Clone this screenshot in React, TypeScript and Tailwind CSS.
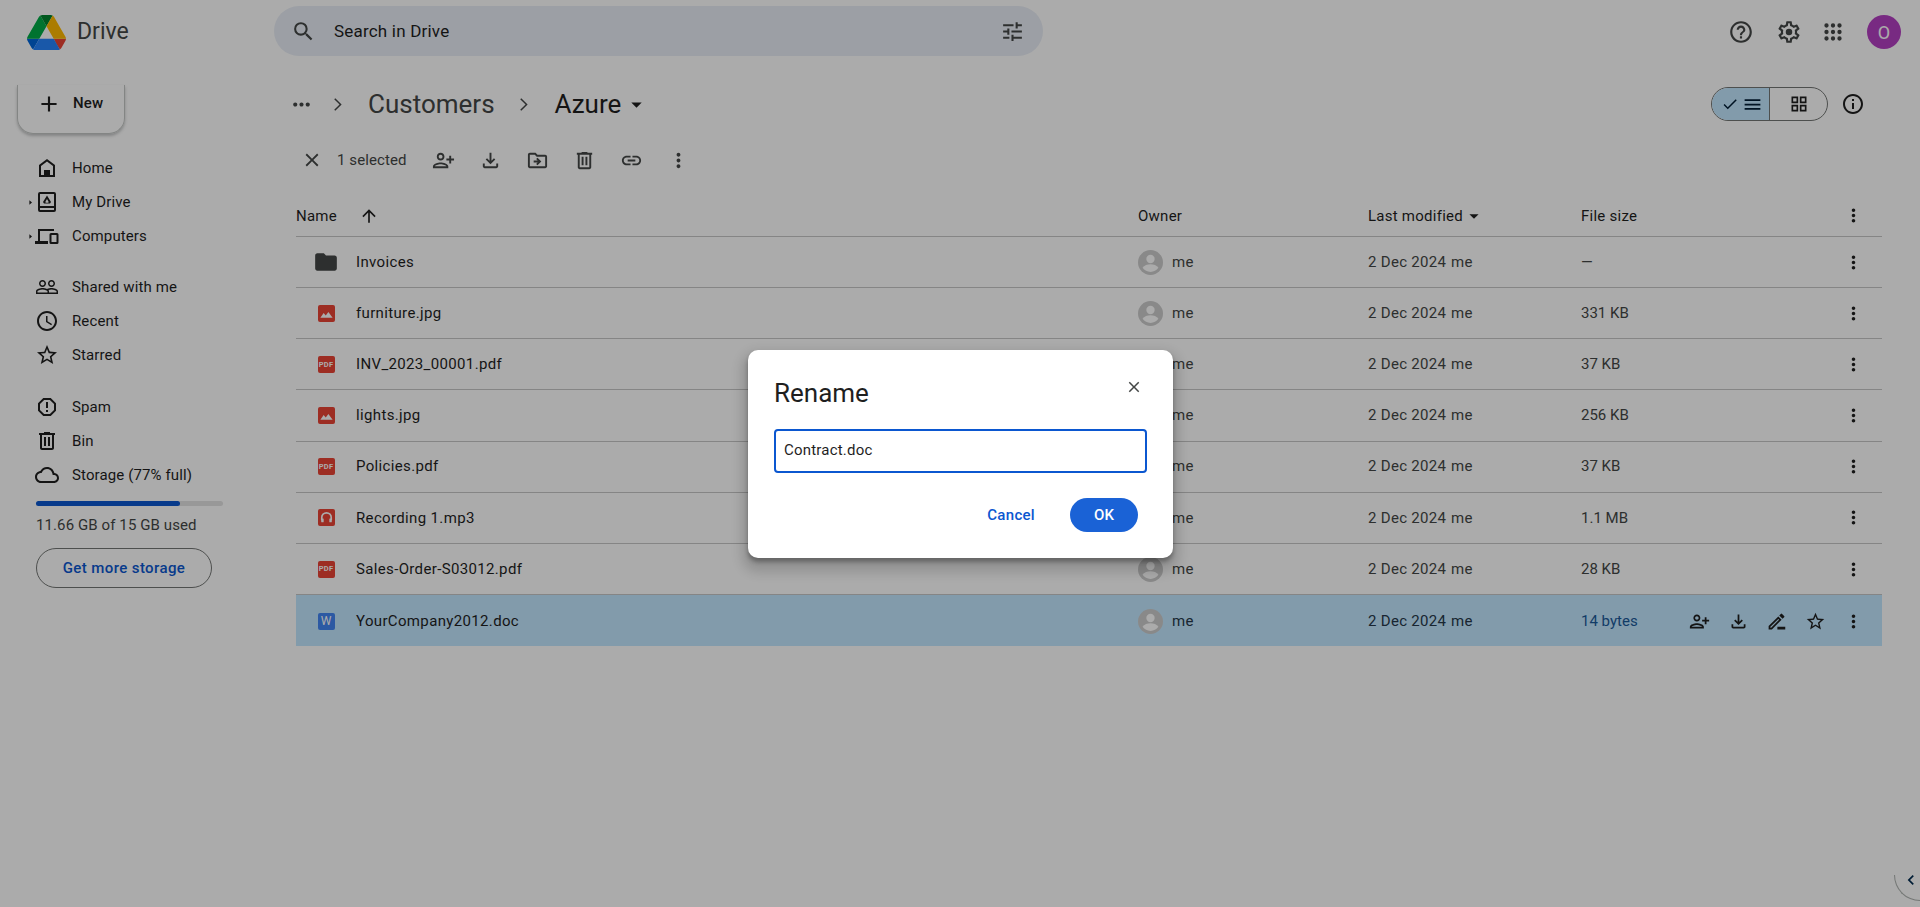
import React from "react";

const P: Record<string, string> = {
  search: "M15.5 14h-.79l-.28-.27A6.471 6.471 0 0 0 16 9.5 6.5 6.5 0 1 0 9.5 16c1.61 0 3.09-.59 4.23-1.57l.27.28v.79l5 4.99L20.49 19l-4.99-5zm-6 0C7.01 14 5 11.99 5 9.5S7.01 5 9.5 5 14 7.01 14 9.5 11.99 14 9.5 14z",
  tune: "M3 17v2h6v-2H3zM3 5v2h10V5H3zm10 16v-2h8v-2h-8v-2h-2v6h2zM7 9v2H3v2h4v2h2V9H7zm14 4v-2H11v2h10zm-6-4h2V7h4V5h-4V3h-2v6z",
  help: "M11 18h2v-2h-2v2zm1-16C6.48 2 2 6.48 2 12s4.48 10 10 10 10-4.48 10-10S17.52 2 12 2zm0 18c-4.41 0-8-3.59-8-8s3.59-8 8-8 8 3.59 8 8-3.59 8-8 8zm0-14c-2.21 0-4 1.79-4 4h2c0-1.1.9-2 2-2s2 .9 2 2c0 2-3 1.75-3 5h2c0-2.25 3-2.5 3-5 0-2.21-1.79-4-4-4z",
  gear: "M19.43 12.98c.04-.32.07-.64.07-.98 0-.34-.03-.66-.07-.98l2.11-1.65c.19-.15.24-.42.12-.64l-2-3.46a.5.5 0 0 0-.61-.22l-2.49 1c-.52-.4-1.08-.73-1.69-.98l-.38-2.65A.488.488 0 0 0 14 2h-4c-.25 0-.46.18-.49.42l-.38 2.65c-.61.25-1.17.59-1.69.98l-2.49-1a.566.566 0 0 0-.18-.03c-.17 0-.34.09-.43.25l-2 3.46c-.13.22-.07.49.12.64l2.11 1.65c-.04.32-.07.65-.07.98 0 .33.03.66.07.98l-2.11 1.65c-.19.15-.24.42-.12.64l2 3.46a.5.5 0 0 0 .61.22l2.49-1c.52.4 1.08.73 1.69.98l.38 2.65c.03.24.24.42.49.42h4c.25 0 .46-.18.49-.42l.38-2.65c.61-.25 1.17-.59 1.69-.98l2.49 1c.06.02.12.03.18.03.17 0 .34-.09.43-.25l2-3.46c.12-.22.07-.49-.12-.64l-2.11-1.65zm-1.98-1.71c.04.31.05.52.05.73 0 .21-.02.43-.05.73l-.14 1.13.89.7 1.08.84-.7 1.21-1.27-.51-1.04-.42-.9.68c-.43.32-.84.56-1.25.73l-1.06.43-.16 1.13-.2 1.35h-1.4l-.19-1.35-.16-1.13-1.06-.43c-.43-.18-.83-.41-1.23-.71l-.91-.7-1.06.43-1.27.51-.7-1.21 1.08-.84.89-.7-.14-1.13c-.03-.31-.05-.54-.05-.74s.02-.43.05-.73l.14-1.13-.89-.7-1.08-.84.7-1.21 1.27.51 1.04.42.9-.68c.43-.32.84-.56 1.25-.73l1.06-.43.16-1.13.2-1.35h1.39l.19 1.35.16 1.13 1.06.43c.43.18.83.41 1.23.71l.91.7 1.06-.43 1.27-.51.7 1.21-1.07.85-.89.7.14 1.13zM12 9a3 3 0 1 0 0 6 3 3 0 0 0 0-6z",
  apps: "M6 4a2 2 0 1 0 0 4 2 2 0 0 0 0-4zm6 0a2 2 0 1 0 0 4 2 2 0 0 0 0-4zm6 0a2 2 0 1 0 0 4 2 2 0 0 0 0-4zM6 10a2 2 0 1 0 0 4 2 2 0 0 0 0-4zm6 0a2 2 0 1 0 0 4 2 2 0 0 0 0-4zm6 0a2 2 0 1 0 0 4 2 2 0 0 0 0-4zM6 16a2 2 0 1 0 0 4 2 2 0 0 0 0-4zm6 0a2 2 0 1 0 0 4 2 2 0 0 0 0-4zm6 0a2 2 0 1 0 0 4 2 2 0 0 0 0-4z",
  home: "M12 3 4 9v12h16V9l-8-6zM6 19v-9l6-4.5 6 4.5v9h-3v-5H9v5H6z",
  myDrive: "M5 2h14a2 2 0 0 1 2 2v16a2 2 0 0 1-2 2H5a2 2 0 0 1-2-2V4a2 2 0 0 1 2-2zm0 2v12h14V4H5zm0 14v2h14v-2H5zm7-12.5 4 6.5-1 1.5H9L8 12l4-6.5zm0 3.4L10.3 12l.5.7h2.4l.5-.7L12 8.9z",
  computers: "M3 5h16v2H5v10h8v3H0v-3h3V5zm13 4h6a1.5 1.5 0 0 1 1.5 1.5v8A1.5 1.5 0 0 1 22 20h-6a1.5 1.5 0 0 1-1.5-1.5v-8A1.5 1.5 0 0 1 16 9zm.5 2v7h5v-7h-5z",
  people: "M16.5 13c-1.2 0-3.07.34-4.5 1-1.43-.67-3.3-1-4.5-1C5.33 13 1 14.08 1 16.25V19h22v-2.75c0-2.17-4.33-3.25-6.5-3.25zm-4 4.5h-10v-1.25c0-.54 2.56-1.75 5-1.75s5 1.21 5 1.75v1.25zm9 0H14v-1.25c0-.46-.2-.86-.52-1.22.88-.3 1.96-.53 3.02-.53 2.44 0 5 1.21 5 1.75v1.25zM7.5 12c1.93 0 3.5-1.57 3.5-3.5S9.43 5 7.5 5 4 6.57 4 8.5 5.57 12 7.5 12zm0-5.5c1.1 0 2 .9 2 2s-.9 2-2 2-2-.9-2-2 .9-2 2-2zm9 5.5c1.93 0 3.5-1.57 3.5-3.5S18.43 5 16.5 5 13 6.57 13 8.5s1.57 3.5 3.5 3.5zm0-5.5c1.1 0 2 .9 2 2s-.9 2-2 2-2-.9-2-2 .9-2 2-2z",
  clock: "M11.99 2C6.47 2 2 6.48 2 12s4.47 10 9.99 10C17.52 22 22 17.52 22 12S17.52 2 11.99 2zM12 20c-4.42 0-8-3.58-8-8s3.58-8 8-8 8 3.58 8 8-3.58 8-8 8zm.5-13H11v6l5.25 3.15.75-1.23-4.5-2.67z",
  star: "M22 9.24l-7.19-.62L12 2 9.19 8.63 2 9.24l5.46 4.73L5.82 21 12 17.27 18.18 21l-1.63-7.03L22 9.24zM12 15.4l-3.76 2.27 1-4.28-3.32-2.88 4.38-.38L12 6.1l1.71 4.04 4.38.38-3.32 2.88 1 4.28L12 15.4z",
  spam: "M15.73 3H8.27L3 8.27v7.46L8.27 21h7.46L21 15.73V8.27L15.73 3zM19 14.9L14.9 19H9.1L5 14.9V9.1L9.1 5h5.8L19 9.1v5.8zM11 7h2v6h-2zM11 15h2v2h-2z",
  trash: "M15 4V3H9v1H4v2h1v13c0 1.1.9 2 2 2h10c1.1 0 2-.9 2-2V6h1V4h-5zm2 15H7V6h10v13zM9 8h2v9H9zm4 0h2v9h-2z",
  cloud: "M19.35 10.04C18.67 6.59 15.64 4 12 4 9.11 4 6.6 5.64 5.35 8.04 2.34 8.36 0 10.91 0 14c0 3.31 2.69 6 6 6h13c2.76 0 5-2.24 5-5 0-2.64-2.05-4.78-4.65-4.96zM19 18H6c-2.21 0-4-1.79-4-4 0-2.05 1.53-3.76 3.56-3.97l1.07-.11.5-.95C8.08 7.14 9.94 6 12 6c2.62 0 4.88 1.86 5.39 4.43l.3 1.5 1.53.11c1.56.1 2.78 1.41 2.78 2.96 0 1.65-1.35 3-3 3z",
  personAdd: "M9 12c2.21 0 4-1.79 4-4s-1.79-4-4-4-4 1.79-4 4 1.79 4 4 4zm0-6c1.1 0 2 .9 2 2s-.9 2-2 2-2-.9-2-2 .9-2 2-2zm0 8c-2.67 0-8 1.34-8 4v2h16v-2c0-2.66-5.33-4-8-4zm-6 4c.2-.71 3.3-2 6-2 2.69 0 5.78 1.28 6 2H3zm17-3v-3h3v-2h-3V7h-2v3h-3v2h3v3h2z",
  download: "M18 15v3H6v-3H4v3c0 1.1.9 2 2 2h12c1.1 0 2-.9 2-2v-3h-2zm-1-4-1.41-1.41L13 12.17V4h-2v8.17L8.41 9.59 7 11l5 5 5-5z",
  move: "M20 6h-8l-2-2H4c-1.1 0-1.99.9-1.99 2L2 18c0 1.1.9 2 2 2h16c1.1 0 2-.9 2-2V8c0-1.1-.9-2-2-2zm0 12H4V6h5.17l2 2H20v10zm-7.84-6H8v2h4.16l-1.59 1.59L11.99 17 16 13l-4.01-4-1.42 1.41L12.16 12z",
  link: "M3.9 12c0-1.71 1.39-3.1 3.1-3.1h4V7H7c-2.76 0-5 2.24-5 5s2.24 5 5 5h4v-1.9H7c-1.71 0-3.1-1.39-3.1-3.1zM8 13h8v-2H8v2zm9-6h-4v1.9h4c1.71 0 3.1 1.39 3.1 3.1s-1.39 3.1-3.1 3.1h-4V17h4c2.76 0 5-2.24 5-5s-2.24-5-5-5z",
  more: "M12 8c1.1 0 2-.9 2-2s-.9-2-2-2-2 .9-2 2 .9 2 2 2zm0 2c-1.1 0-2 .9-2 2s.9 2 2 2 2-.9 2-2-.9-2-2-2zm0 6c-1.1 0-2 .9-2 2s.9 2 2 2 2-.9 2-2-.9-2-2-2z",
  moreH: "M6 10c-1.1 0-2 .9-2 2s.9 2 2 2 2-.9 2-2-.9-2-2-2zm12 0c-1.1 0-2 .9-2 2s.9 2 2 2 2-.9 2-2-.9-2-2-2zm-6 0c-1.1 0-2 .9-2 2s.9 2 2 2 2-.9 2-2-.9-2-2-2z",
  close: "M19 6.41 17.59 5 12 10.59 6.41 5 5 6.41 10.59 12 5 17.59 6.41 19 12 13.41 17.59 19 19 17.59 13.41 12z",
  check: "M9 16.17 4.83 12l-1.42 1.41L9 19 21 7l-1.41-1.41z",
  menu: "M3 18h18v-2H3v2zm0-5h18v-2H3v2zm0-7v2h18V6H3z",
  grid: "M3 3v8h8V3H3zm6 6H5V5h4v4zm-6 4v8h8v-8H3zm6 6H5v-4h4v4zm4-16v8h8V3h-8zm6 6h-4V5h4v4zm-6 4v8h8v-8h-8zm6 6h-4v-4h4v4z",
  info: "M11 7h2v2h-2zm0 4h2v6h-2zm1-9C6.48 2 2 6.48 2 12s4.48 10 10 10 10-4.48 10-10S17.52 2 12 2zm0 18c-4.41 0-8-3.59-8-8s3.59-8 8-8 8 3.59 8 8-3.59 8-8 8z",
  edit: "M3 17.25V21h3.75L17.81 9.94l-3.75-3.75L3 17.25zM5.92 19H5v-.92l9.06-9.06.92.92L5.92 19zM20.71 7.04a.996.996 0 0 0 0-1.41l-2.34-2.34a1.003 1.003 0 0 0-1.41 0l-1.83 1.83 3.75 3.75 1.83-1.83zM13 18h9v3h-9z",
  up: "M4 12l1.41 1.41L11 7.83V20h2V7.83l5.58 5.59L20 12l-8-8-8 8z",
  chevron: "M8.9 5.9 15 12l-6.1 6.1-1-1L13 12 7.9 6.9z",
  caret: "M7 10l5 5 5-5z",
  caretR: "M9 6l7 6-7 6z",
  plus: "M19 13h-6v6h-2v-6H5v-2h6V5h2v6h6v2z",
  folder: "M10 4H4c-1.1 0-2 .9-2 2v12c0 1.1.9 2 2 2h16c1.1 0 2-.9 2-2V8c0-1.1-.9-2-2-2h-8l-2-2z",
  left: "M15.41 7.41 14 6l-6 6 6 6 1.41-1.41L10.83 12z",
};

function Ic({ n, s = 24, c = "text-[#444746]" }: { n: string; s?: number; c?: string }) {
  return (
    <svg viewBox="0 0 24 24" width={s} height={s} fill="currentColor" className={`shrink-0 ${c}`}>
      <path d={P[n]} fillRule="evenodd" clipRule="evenodd" />
    </svg>
  );
}

function Logo() {
  return (
    <svg viewBox="0 0 87.3 78" width="39" height="35" className="shrink-0">
      <path d="m6.6 66.85 3.85 6.65c.8 1.4 1.95 2.5 3.3 3.3l13.75-23.8h-27.5c0 1.55.4 3.1 1.2 4.5z" fill="#0066da" />
      <path d="m43.65 25-13.75-23.8c-1.35.8-2.5 1.9-3.3 3.3l-25.4 44a9.06 9.06 0 0 0 -1.2 4.5h27.5z" fill="#00ac47" />
      <path d="m73.55 76.8c1.35-.8 2.5-1.9 3.3-3.3l1.6-2.75 7.65-13.25c.8-1.4 1.2-2.95 1.2-4.5h-27.502l5.852 11.5z" fill="#ea4335" />
      <path d="m43.65 25 13.75-23.8c-1.35-.8-2.9-1.2-4.5-1.2h-18.5c-1.6 0-3.15.45-4.5 1.2z" fill="#00832d" />
      <path d="m59.8 53h-32.3l-13.75 23.8c1.35.8 2.9 1.2 4.5 1.2h50.8c1.6 0 3.15-.45 4.5-1.2z" fill="#2684fc" />
      <path d="m73.4 26.5-12.7-22c-.8-1.4-1.95-2.5-3.3-3.3l-13.75 23.8 16.15 28h27.45c0-1.55-.4-3.1-1.2-4.5z" fill="#ffba00" />
    </svg>
  );
}

function FileIcon({ t }: { t: string }) {
  if (t === "folder") return <Ic n="folder" s={26} c="text-[#444746]" />;
  const bg = t === "doc" ? "bg-[#4285f4]" : "bg-[#ea4335]";
  return (
    <div className={`flex h-[17px] w-[17px] items-center justify-center rounded-[2px] ${bg}`}>
      {t === "pdf" && <span className="text-[7.5px] font-bold leading-none tracking-[0.3px] text-white">PDF</span>}
      {t === "doc" && <span className="text-[12px] leading-none text-white">W</span>}
      {t === "img" && (
        <svg viewBox="0 0 18 18" width="17" height="17" fill="white">
          <path d="M2.5 13.5 6 8.5l2.2 2.7L11 7.5l4.5 6z" />
        </svg>
      )}
      {t === "audio" && (
        <svg viewBox="0 0 18 18" width="17" height="17" fill="none" stroke="white" strokeWidth="1.8">
          <path d="M4 12V9a5 5 0 0 1 10 0v3" />
          <rect x="3.4" y="10" width="2.6" height="4" rx="0.6" fill="white" stroke="none" />
          <rect x="12" y="10" width="2.6" height="4" rx="0.6" fill="white" stroke="none" />
        </svg>
      )}
    </div>
  );
}

function Avatar() {
  return (
    <svg viewBox="0 0 24 24" width="25" height="25" className="shrink-0">
      <circle cx="12" cy="12" r="12" fill="#cdcdcd" />
      <circle cx="12" cy="8.6" r="4" fill="#ffffff" />
      <path d="M4.4 17c1.6-2.4 4.6-3.4 7.6-3.4s6 1 7.6 3.4c-1.8 2.4-4.6 4-7.6 4s-5.8-1.6-7.6-4z" fill="#ffffff" />
    </svg>
  );
}

function NavRow({ n, label, caret }: { n: string; label: string; caret?: boolean }) {
  return (
    <div className="flex h-[34px] items-center pl-[26px] text-[15px] tracking-[0.12px] text-[#1f1f1f]">
      <div className="flex w-[9px] justify-center">{caret && <Ic n="caretR" s={9} c="text-[#1f1f1f]" />}</div>
      <Ic n={n} s={24} c="text-[#1f1f1f]" />
      <span className="ml-[13px]">{label}</span>
    </div>
  );
}

const rows = [
  { name: "Invoices", t: "folder", size: "—" },
  { name: "furniture.jpg", t: "img", size: "331 KB" },
  { name: "INV_2023_00001.pdf", t: "pdf", size: "37 KB" },
  { name: "lights.jpg", t: "img", size: "256 KB" },
  { name: "Policies.pdf", t: "pdf", size: "37 KB" },
  { name: "Recording 1.mp3", t: "audio", size: "1.1 MB" },
  { name: "Sales-Order-S03012.pdf", t: "pdf", size: "28 KB" },
  { name: "YourCompany2012.doc", t: "doc", size: "14 bytes", sel: true },
];

function Slot({ n, c }: { n: string; c?: string }) {
  return (
    <div className="flex w-[38.5px] justify-center">
      <Ic n={n} s={21} c={c ?? "text-[#1f1f1f]"} />
    </div>
  );
}

export default function App() {
  return (
    <div className="relative h-[907px] w-[1920px] overflow-hidden bg-white font-['Roboto',sans-serif] text-[#1f1f1f]">
      <header className="flex h-[64px] items-center">
        <div className="flex w-[274px] items-center pl-[27px]">
          <Logo />
          <span className="ml-[11px] text-[23px] text-[#444746]">Drive</span>
        </div>
        <div className="mb-[2px] flex h-[50px] w-[769px] items-center rounded-full bg-[#e9eef6] pl-[17px] pr-[18px]">
          <Ic n="search" s={25} />
          <span className="ml-[18px] pt-[2px] text-[17px] tracking-[0.2px] text-[#1f1f1f]">Search in Drive</span>
          <div className="ml-auto"><Ic n="tune" s={25} /></div>
        </div>
        <div className="ml-auto flex items-center pr-[19px]">
          <Ic n="help" s={26} />
          <div className="ml-[22px]"><Ic n="gear" s={26} /></div>
          <div className="ml-[18px]"><Ic n="apps" s={26} /></div>
          <div className="ml-[21px] flex h-[34px] w-[34px] items-center justify-center rounded-full bg-[#b43fc2] text-[18px] text-white">O</div>
        </div>
      </header>

      <div className="flex">
        <aside className="w-[296px] shrink-0">
          <div className="ml-[17px] mt-[21px] flex h-[49px] w-[108px] items-center rounded-b-[16px] border-x border-b border-[#c4c7c5] pb-[11px] pl-[18px] shadow-[0_2px_3px_rgba(60,64,67,0.3)]">
            <Ic n="plus" s={26} c="text-[#1f1f1f]" />
            <span className="ml-[11px] text-[15px] font-medium tracking-[0.1px]">New</span>
          </div>
          <div className="mt-[17px]">
            <NavRow n="home" label="Home" />
            <NavRow n="myDrive" label="My Drive" caret />
            <NavRow n="computers" label="Computers" caret />
          </div>
          <div className="mt-[17px]">
            <NavRow n="people" label="Shared with me" />
            <NavRow n="clock" label="Recent" />
            <NavRow n="star" label="Starred" />
          </div>
          <div className="mt-[18px]">
            <NavRow n="spam" label="Spam" />
            <NavRow n="trash" label="Bin" />
            <NavRow n="cloud" label="Storage (77% full)" />
          </div>
          <div className="ml-[36px] mt-[9px] h-[5px] w-[187px] rounded-full bg-[#e3e3e3]">
            <div className="h-full w-[144px] rounded-full bg-[#0b57d0]" />
          </div>
          <div className="ml-[36px] mt-[9px] text-[15px] leading-[20px] tracking-[0.1px] text-[#444746]">11.66 GB of 15 GB used</div>
          <div className="ml-[36px] mt-[13px] flex h-[40px] w-[176px] items-center justify-center rounded-full border border-[#747775] text-[15px] font-medium tracking-[0.4px] text-[#0b57d0]">Get more storage</div>
        </aside>

        <main className="flex-1 pr-[38px]">
          <div className="flex h-[80px] items-center">
            <div className="ml-[-7px]"><Ic n="moreH" s={25} /></div>
            <div className="ml-[12px]"><Ic n="chevron" s={25} /></div>
            <span className="ml-[17px] text-[26px] text-[#444746]">Customers</span>
            <div className="ml-[17px]"><Ic n="chevron" s={25} /></div>
            <span className="ml-[18px] text-[26px] text-[#1f1f1f]">Azure</span>
            <div className="ml-[3px]"><Ic n="caret" s={25} c="text-[#1f1f1f]" /></div>
            <div className="ml-auto flex h-[34px] w-[117px] overflow-hidden rounded-full border border-[#747775]">
              <div className="flex w-[58px] items-center justify-center gap-[3px] border-r border-[#747775] bg-[#c2e7ff] pl-[2px]">
                <Ic n="check" s={18} c="text-[#001d35]" />
                <Ic n="menu" s={21} c="text-[#001d35]" />
              </div>
              <div className="flex flex-1 items-center justify-center"><Ic n="grid" s={20} c="text-[#1f1f1f]" /></div>
            </div>
            <div className="ml-[13px] mr-[17px]"><Ic n="info" s={24} c="text-[#1f1f1f]" /></div>
          </div>

          <div className="flex h-[32px] items-center text-[15px] text-[#444746]">
            <div className="ml-[5px]"><Ic n="close" s={22} /></div>
            <span className="ml-[14px] w-[83px] tracking-[0.1px]">1 selected</span>
            <div className="flex w-[47px] justify-center"><Ic n="personAdd" s={23} /></div>
            <div className="flex w-[47px] justify-center"><Ic n="download" s={23} /></div>
            <div className="flex w-[47px] justify-center"><Ic n="move" s={23} /></div>
            <div className="flex w-[47px] justify-center"><Ic n="trash" s={23} /></div>
            <div className="flex w-[47px] justify-center"><Ic n="link" s={23} /></div>
            <div className="flex w-[47px] justify-center"><Ic n="more" s={23} /></div>
          </div>

          <div className="mt-[19px] grid h-[42px] grid-cols-[842px_230px_213px_1fr] items-center border-b border-[#c7c7c7] text-[15px] tracking-[0.25px] text-[#1f1f1f]">
            <div className="flex items-center">
              <span className="pt-[1px]">Name</span>
              <div className="ml-[22px]"><Ic n="up" s={20} c="text-[#1f1f1f]" /></div>
            </div>
            <span className="pt-[1px]">Owner</span>
            <div className="flex items-center">
              <span className="pt-[1px]">Last modified</span>
              <Ic n="caret" s={22} c="text-[#1f1f1f]" />
            </div>
            <div className="flex items-center justify-between pr-[9px]">
              <span className="pt-[1px]">File size</span>
              <Slot n="more" />
            </div>
          </div>

          {rows.map((r) => (
            <div
              key={r.name}
              className={`grid h-[51.17px] grid-cols-[842px_230px_213px_1fr] items-center text-[15px] ${
                r.sel ? "bg-[#c2e7ff] pt-[1px] text-[#26384a]" : "border-b border-[#c7c7c7] text-[#444746]"
              }`}
            >
              <div className="flex items-center">
                <div className="flex w-[60px] justify-center"><FileIcon t={r.t} /></div>
                <span className="tracking-[0.35px] text-[#1f1f1f]">{r.name}</span>
              </div>
              <div className="flex items-center">
                <Avatar />
                <span className="ml-[9px] tracking-[0.3px]">me</span>
              </div>
              <div className="flex items-center tracking-[0.3px]">
                <span className="w-[83px]">2 Dec 2024</span>
                <span>me</span>
              </div>
              <div className="flex items-center justify-between pr-[9px]">
                <span className={r.sel ? "text-[#1a5a9a]" : ""}>{r.size}</span>
                <div className="flex items-center">
                  {r.sel && (
                    <>
                      <Slot n="personAdd" />
                      <Slot n="download" />
                      <Slot n="edit" />
                      <Slot n="star" />
                    </>
                  )}
                  <Slot n="more" />
                </div>
              </div>
            </div>
          ))}
        </main>
      </div>

      <div className="absolute inset-0 bg-black/[0.33]" />

      <div className="absolute bottom-[6px] right-[-30px] h-[26px] w-[56px] rounded-bl-[26px] border-b border-l border-[#747775] pl-[6px]">
        <div className="mt-[-5px]"><Ic n="left" s={20} c="text-[#001d35]" /></div>
      </div>

      <div className="absolute left-[748px] top-[350px] h-[208px] w-[425px] rounded-[10px] bg-white px-[26px] shadow-[0_8px_12px_6px_rgba(0,0,0,0.15),0_4px_4px_rgba(0,0,0,0.3)]">
        <div className="flex h-[79px] items-start justify-between">
          <span className="mt-[27px] text-[26px] leading-[32px] text-[#1f1f1f]">Rename</span>
          <div className="mr-[4px] mt-[28px]"><Ic n="close" s={18} /></div>
        </div>
        <div className="flex h-[44px] items-center rounded-[4px] border-2 border-[#0b57d0] pb-[1px] pl-[8px] text-[15px] tracking-[0.2px] text-[#1f1f1f]">Contract.doc</div>
        <div className="mt-[25px] flex items-center justify-end pr-[9px]">
          <span className="text-[15px] font-medium tracking-[0.3px] text-[#0b57d0]">Cancel</span>
          <div className="ml-[35px] flex h-[34px] w-[68px] items-center justify-center rounded-full bg-[#1a62d6] text-[15px] font-medium text-white">OK</div>
        </div>
      </div>
    </div>
  );
}
